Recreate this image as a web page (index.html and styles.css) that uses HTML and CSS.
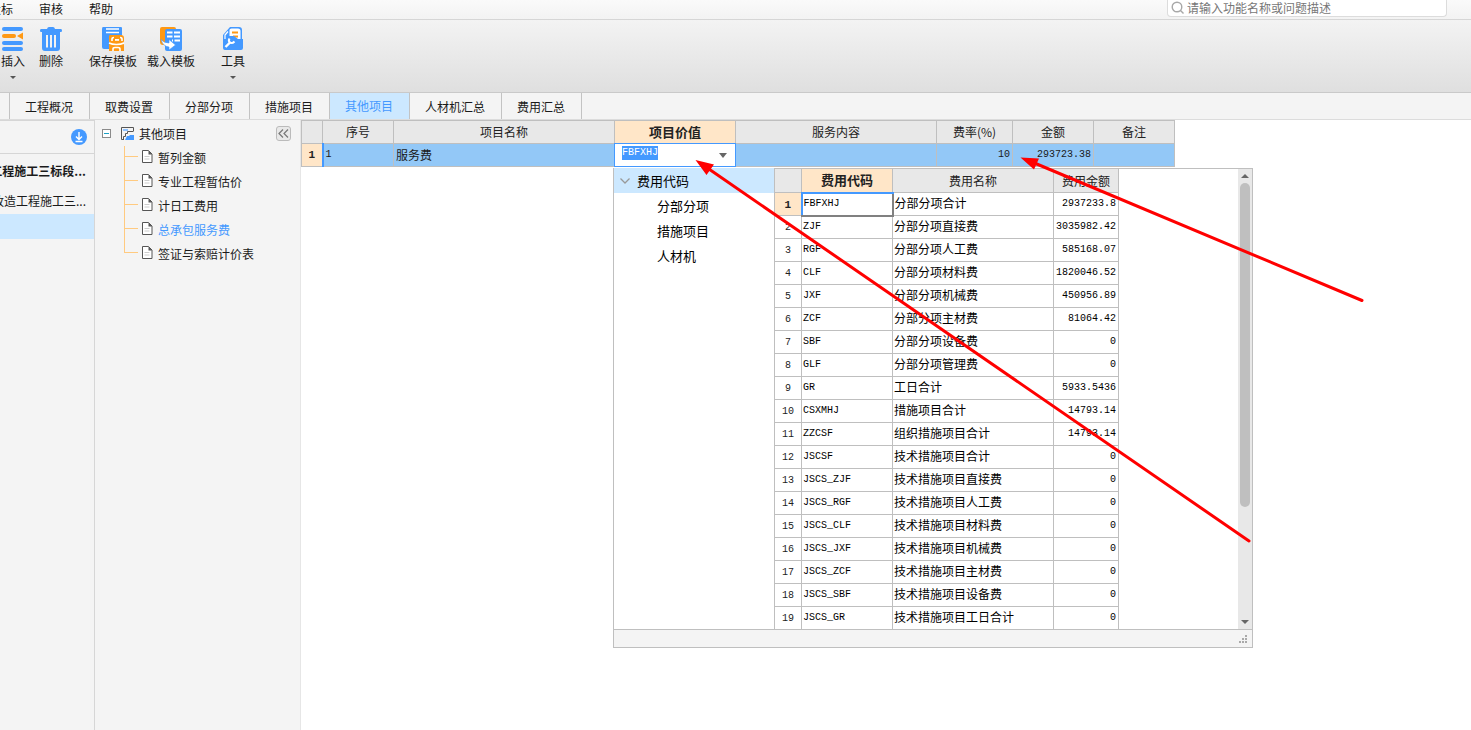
FILE: index.html
```html
<!DOCTYPE html>
<html lang="zh-CN">
<head>
<meta charset="utf-8">
<title>其他项目</title>
<link rel="stylesheet" href="styles.css">
</head>
<body>
<div class="app">
  <header class="menubar">
    <nav class="menus">
      <button class="menu" type="button">招投标</button>
      <button class="menu" type="button">审核</button>
      <button class="menu" type="button">帮助</button>
    </nav>
    <label class="search">
      <svg width="14" height="14" viewBox="0 0 14 14" fill="none" stroke="#a8a8a8" stroke-width="1.4"><circle cx="6" cy="6" r="4.8"/><path d="M9.5 9.5l3 3"/></svg>
      <input class="search-input" type="text" aria-label="搜索" placeholder="请输入功能名称或问题描述">
    </label>
  </header>

  <div class="toolbar">
    <div class="tool-group">
      <button class="tool" type="button">
        <svg width="24" height="26" viewBox="0 0 24 26"><g fill="#4499ff"><rect x="1" y="1" width="21" height="4" rx="2"/><rect x="1" y="15" width="21" height="4" rx="2"/><rect x="1" y="21" width="21" height="4" rx="2"/></g><rect x="1" y="8" width="14" height="4" rx="2" fill="#ff9914"/><path d="M16 10l6-3.500v7z" fill="#ff9914"/></svg>
        <span>插入</span><i class="drop"></i>
      </button>
      <button class="tool" type="button">
        <svg width="24" height="26" viewBox="0 0 24 26"><path fill="#4499ff" d="M2 3h6q.5-2 2-2h4q1.500 0 2 2h6q1 0 1 1.500T22 6H2Q1 6 1 4.500T2 3zM3 6h18v16q0 3-3 3H6q-3 0-3-3z"/><path stroke="#f2f2f2" stroke-width="2" d="M8 9v12.500M12 9v12.500M16 9v12.500"/></svg>
        <span>删除</span>
      </button>
    </div>
    <div class="tool-group tool-group-tight">
      <button class="tool" type="button">
        <svg width="24" height="26" viewBox="0 0 24 26"><path fill="#4499ff" d="M2 1h18q1 0 1 1v8H9v13H3q-2 0-2-2V3q0-2 1-2z"/><path stroke="#fff" stroke-width="1.500" d="M5 3h13M5 6.500h13"/><path fill="#ff9914" d="M9 9h11q3 0 3 3v3q0 1.500-1 2 1 1 1 2v6H8v-6q0-1 1-2-1-1-1-2v-4q0-2 1-2z"/><path fill="none" stroke="#fff" stroke-width="1.600" d="M11 15v-2q0-1.500 2-1.500M21 15v-2q0-1.500-2-1.500M8 17q3 1.500 7.500 1.500T23 17M12 25v-2q0-1.500 2-1.500h3q2 0 2 1.500v2"/><rect x="14" y="13" width="4" height="1.800" fill="#fff"/></svg>
        <span>保存模板</span>
      </button>
      <button class="tool" type="button">
        <svg width="24" height="26" viewBox="0 0 24 26"><path fill="#ff9914" d="M3 1h12q2 0 2 2v2H8v14H4q-3 0-3-3V3q0-2 2-2z"/><rect x="6" y="3" width="17" height="22" rx="2" fill="#4499ff"/><path stroke="#fff" stroke-width="1.800" d="M8 6.500h5.500M15 6.500h6M8 10.500h5.500M15 10.500h6M13 14.500h1M15.500 14.500h5.500"/><path fill="#fff" stroke="#4499ff" stroke-width=".6" d="M2 13.500q3 3.500 8 3.500v-3.500l6.500 5.500-6.500 5V21Q4 20.500 2 13.500z"/></svg>
        <span>载入模板</span>
      </button>
    </div>
    <div class="tool-group">
      <button class="tool" type="button">
        <svg width="24" height="26" viewBox="0 0 24 26"><path fill="#4499ff" d="M9 1h9q3 0 3 3v10l1 2v6q0 2-2 2H4q-2 0-2-2V9z"/><path fill="#fff" d="M8.500 4q0-1.500 2-1.500H17q2.500 0 2.500 2.500v9H11V10H8.500z"/><path stroke="#ff9914" stroke-width="1.800" d="M11 6.500h6M12 10.500h5"/><path fill="none" stroke="#fff" stroke-width="1.200" d="M4 13V9l3-3.500"/><path fill="#4499ff" d="M6 10h7l4 3h5v8H8z"/><path fill="none" stroke="#fff" stroke-width="2.400" d="M4.500 21l5-5"/><path fill="none" stroke="#fff" stroke-width="2" d="M8.500 12.500q-1.500 2.500.5 4t4.500-1"/></svg>
        <span>工具</span><i class="drop"></i>
      </button>
    </div>
  </div>

  <nav class="tabs">
    <button class="tab" type="button">工程概况</button>
    <button class="tab" type="button">取费设置</button>
    <button class="tab" type="button">分部分项</button>
    <button class="tab" type="button">措施项目</button>
    <button class="tab tab-active" type="button">其他项目</button>
    <button class="tab" type="button">人材机汇总</button>
    <button class="tab" type="button">费用汇总</button>
  </nav>

  <div class="workspace">
    <aside class="projects">
      <div class="projects-head">
        <button class="round" type="button" aria-label="下载">
          <svg width="16" height="16" viewBox="0 0 16 16"><circle cx="8" cy="8" r="8" fill="#4499ff"/><path d="M8 3v7M5 7.500l3 3 3-3M4.500 12.500h7" fill="none" stroke="#fff" stroke-width="1.400"/></svg>
        </button>
      </div>
      <div class="project project-bold"><span>工程施工三标段...</span></div>
      <div class="project"><span>改造工程施工三...</span></div>
      <div class="project project-selected"></div>
    </aside>

    <aside class="tree">
      <div class="tree-root">
        <button class="minus" type="button" aria-label="收起">
          <svg width="9" height="9" viewBox="0 0 9 9"><rect x=".5" y=".5" width="8" height="8" fill="#fff" stroke="#8b8b8b"/><path d="M2 4.500h5" stroke="#1ba1c5"/></svg>
        </button>
        <svg width="13" height="13" viewBox="0 0 13 13"><path d="M3 12.500H.5V.5h12V4" fill="none" stroke="#555"/><path d="M2 2h5v2H2z" fill="#8fc2ff"/><path d="M2.500 12V9.500h2v-3h2v-2h6" fill="none" stroke="#555"/><path d="M4 13l2-4h2l1-1h4v5z" fill="#4499ff"/></svg>
        <span class="tree-title">其他项目</span>
        <button class="collapse" type="button" aria-label="折叠面板">
          <svg width="11" height="9" viewBox="0 0 11 9" fill="none" stroke="#777" stroke-width="1.200"><path d="M5 .5l-4 4 4 4M10 .5l-4 4 4 4"/></svg>
        </button>
      </div>
      <ul class="leaves">
        <li class="leaf"><svg class="doc" width="11" height="13" viewBox="0 0 11 13"><path d="M.5.5h6l3.500 3.500v8.500H.5z" fill="#fff" stroke="#555"/><path d="M6.500.5v4H10z" fill="#555"/><path d="M2.500 6.500h5M2.500 9h5" stroke="#ccc"/></svg><a href="#">暂列金额</a></li>
        <li class="leaf"><svg class="doc" width="11" height="13" viewBox="0 0 11 13"><path d="M.5.5h6l3.500 3.500v8.500H.5z" fill="#fff" stroke="#555"/><path d="M6.500.5v4H10z" fill="#555"/><path d="M2.500 6.500h5M2.500 9h5" stroke="#ccc"/></svg><a href="#">专业工程暂估价</a></li>
        <li class="leaf"><svg class="doc" width="11" height="13" viewBox="0 0 11 13"><path d="M.5.5h6l3.500 3.500v8.500H.5z" fill="#fff" stroke="#555"/><path d="M6.500.5v4H10z" fill="#555"/><path d="M2.500 6.500h5M2.500 9h5" stroke="#ccc"/></svg><a href="#">计日工费用</a></li>
        <li class="leaf leaf-active"><svg class="doc" width="11" height="13" viewBox="0 0 11 13"><path d="M.5.5h6l3.500 3.500v8.500H.5z" fill="#fff" stroke="#555"/><path d="M6.500.5v4H10z" fill="#555"/><path d="M2.500 6.500h5M2.500 9h5" stroke="#ccc"/></svg><a href="#">总承包服务费</a></li>
        <li class="leaf"><svg class="doc" width="11" height="13" viewBox="0 0 11 13"><path d="M.5.5h6l3.500 3.500v8.500H.5z" fill="#fff" stroke="#555"/><path d="M6.500.5v4H10z" fill="#555"/><path d="M2.500 6.500h5M2.500 9h5" stroke="#ccc"/></svg><a href="#">签证与索赔计价表</a></li>
      </ul>
    </aside>

    <main class="main">
      <table class="grid grid-main">
        <colgroup><col class="w-21"><col class="w-71"><col class="w-221"><col class="w-121"><col class="w-201"><col class="w-76"><col class="w-81"><col class="w-81"></colgroup>
        <thead>
          <tr><th></th><th>序号</th><th>项目名称</th><th class="hot">项目价值</th><th>服务内容</th><th>费率(%)</th><th>金额</th><th>备注</th></tr>
        </thead>
        <tbody>
          <tr class="picked">
            <th class="hot mono">1</th><td class="mono first">1</td><td>服务费</td>
            <td class="edit-cell"><div class="combo"><input class="combo-input mono" type="text" aria-label="项目价值" value="FBFXHJ"><button class="combo-btn" type="button" aria-label="展开"><i class="combo-arrow"></i></button></div></td>
            <td></td><td class="mono num">10</td><td class="mono num">293723.38</td><td></td>
          </tr>
        </tbody>
      </table>

      <section class="popup">
        <div class="popup-body">
          <div class="codes">
            <div class="code-root"><svg width="10" height="6" viewBox="0 0 10 6" fill="none" stroke="#999" stroke-width="1.300"><path d="M.5.5L5 5 9.500.5"/></svg>费用代码</div>
            <div class="code-leaf">分部分项</div>
            <div class="code-leaf">措施项目</div>
            <div class="code-leaf">人材机</div>
          </div>
          <div class="fees">
            <table class="grid grid-fees">
              <colgroup><col class="w-27"><col class="w-91"><col class="w-161"><col class="w-65"></colgroup>
              <thead><tr><th></th><th class="hot">费用代码</th><th>费用名称</th><th>费用金额</th></tr></thead>
              <tbody>
                <tr><th class="hot mono">1</th><td class="mono current">FBFXHJ</td><td>分部分项合计</td><td class="mono num">2937233.8</td></tr>
                <tr><th class="mono">2</th><td class="mono">ZJF</td><td>分部分项直接费</td><td class="mono num">3035982.42</td></tr>
                <tr><th class="mono">3</th><td class="mono">RGF</td><td>分部分项人工费</td><td class="mono num">585168.07</td></tr>
                <tr><th class="mono">4</th><td class="mono">CLF</td><td>分部分项材料费</td><td class="mono num">1820046.52</td></tr>
                <tr><th class="mono">5</th><td class="mono">JXF</td><td>分部分项机械费</td><td class="mono num">450956.89</td></tr>
                <tr><th class="mono">6</th><td class="mono">ZCF</td><td>分部分项主材费</td><td class="mono num">81064.42</td></tr>
                <tr><th class="mono">7</th><td class="mono">SBF</td><td>分部分项设备费</td><td class="mono num">0</td></tr>
                <tr><th class="mono">8</th><td class="mono">GLF</td><td>分部分项管理费</td><td class="mono num">0</td></tr>
                <tr><th class="mono">9</th><td class="mono">GR</td><td>工日合计</td><td class="mono num">5933.5436</td></tr>
                <tr><th class="mono">10</th><td class="mono">CSXMHJ</td><td>措施项目合计</td><td class="mono num">14793.14</td></tr>
                <tr><th class="mono">11</th><td class="mono">ZZCSF</td><td>组织措施项目合计</td><td class="mono num">14793.14</td></tr>
                <tr><th class="mono">12</th><td class="mono">JSCSF</td><td>技术措施项目合计</td><td class="mono num">0</td></tr>
                <tr><th class="mono">13</th><td class="mono">JSCS_ZJF</td><td>技术措施项目直接费</td><td class="mono num">0</td></tr>
                <tr><th class="mono">14</th><td class="mono">JSCS_RGF</td><td>技术措施项目人工费</td><td class="mono num">0</td></tr>
                <tr><th class="mono">15</th><td class="mono">JSCS_CLF</td><td>技术措施项目材料费</td><td class="mono num">0</td></tr>
                <tr><th class="mono">16</th><td class="mono">JSCS_JXF</td><td>技术措施项目机械费</td><td class="mono num">0</td></tr>
                <tr><th class="mono">17</th><td class="mono">JSCS_ZCF</td><td>技术措施项目主材费</td><td class="mono num">0</td></tr>
                <tr><th class="mono">18</th><td class="mono">JSCS_SBF</td><td>技术措施项目设备费</td><td class="mono num">0</td></tr>
                <tr><th class="mono">19</th><td class="mono">JSCS_GR</td><td>技术措施项目工日合计</td><td class="mono num">0</td></tr>
              </tbody>
            </table>
            <div class="scroll">
              <i class="scroll-up"></i>
              <div class="scroll-track"><div class="scroll-thumb"></div></div>
              <i class="scroll-down"></i>
            </div>
          </div>
        </div>
        <div class="popup-foot">
          <svg width="8" height="8" viewBox="0 0 8 8" fill="#aaa"><path d="M6 0h2v2H6zM3 3h2v2H3zM6 3h2v2H6zM0 6h2v2H0zM3 6h2v2H3zM6 6h2v2H6z"/></svg>
        </div>
      </section>
    </main>
  </div>

  <svg class="arrows" width="1471" height="730" viewBox="0 0 1471 730" fill="#f00" stroke="#f00" stroke-linecap="round">
    <path d="M706 167L1249 541M1032 162L1362 300.500" stroke-width="3"/>
    <path d="M695.500 160l18.500 4.500L706.500 175zM1020.500 157.500l18.500 1L1034 169.500z" stroke="none"/>
  </svg>
</div>
<script src="app.js"></script>
</body>
</html>
```

FILE: styles.css
```css
* { box-sizing: border-box; }
body {
  margin: 0;
  font: 12px/16px "Noto Sans CJK SC", sans-serif;
  color: #1a1a1a;
  background: #fff;
}
button {
  font: inherit;
  color: inherit;
  background: none;
  border: 0;
  padding: 0;
}
input { font: inherit; }
svg { display: block; flex: none; }
.app {
  position: relative;
  display: flex;
  flex-direction: column;
  min-height: 100vh;
  overflow: hidden;
}

.menubar {
  display: flex;
  justify-content: space-between;
  align-items: flex-start;
  height: 20px;
  padding-right: 24px;
  background: linear-gradient(#fafafa, #f3f3f3);
  border-bottom: 1px solid #d6d6d6;
}
.menus { display: flex; gap: 26px; margin-left: -23px; padding-top: 1px; }
.menu { white-space: nowrap; }
.search {
  display: flex;
  align-items: center;
  gap: 2px;
  width: 280px;
  height: 17px;
  padding: 0 3px;
  background: #fff;
  border: 1px solid #dcdcdc;
  border-top: 0;
  border-radius: 0 0 4px 4px;
}
.search-input {
  flex: 1;
  min-width: 0;
  height: 16px;
  padding: 0;
  border: 0;
  outline: 0;
  background: none;
}
.search-input::placeholder { color: #777; opacity: 1; }

.toolbar {
  display: flex;
  gap: 26px;
  height: 73px;
  padding: 6px 1px 0;
  background: linear-gradient(#f3f3f3, #dfdfdf);
  border-bottom: 1px solid #c9c9c9;
}
.tool-group { display: flex; gap: 14px; }
.tool-group-tight { gap: 10px; }
.tool {
  display: flex;
  flex-direction: column;
  align-items: center;
  gap: 1px;
  height: 54px;
  white-space: nowrap;
}
.drop {
  margin-top: 6px;
  border: 3px solid transparent;
  border-top-color: #555;
  border-bottom: 0;
}

.tabs {
  display: flex;
  height: 27px;
  padding-left: 9px;
  background: #f4f4f4;
  border-bottom: 1px solid #dcdcdc;
}
.tab {
  padding: 2px 16px 0 15px;
  border-left: 1px solid #c3c3c3;
}
.tab:last-child { border-right: 1px solid #c3c3c3; }
.tab-active { padding-top: 0; color: #4499ff; background: #cce8ff; }

.workspace { flex: 1; display: flex; }
.projects {
  width: 95px;
  overflow: hidden;
  background: #f4f4f4;
  border-right: 1px solid #d6d6d6;
}
.projects-head {
  display: flex;
  justify-content: flex-end;
  align-items: center;
  height: 34px;
  padding-right: 7px;
  border-top: 1px solid #d6d6d6;
  border-bottom: 1px solid #d6d6d6;
}
.project {
  display: flex;
  justify-content: flex-end;
  align-items: center;
  height: 26px;
  padding-right: 8px;
  white-space: nowrap;
}
.project-bold { height: 34px; font-weight: 700; }
.project-selected { height: 25px; background: #cce8ff; }

.tree {
  width: 206px;
  background: #f4f4f4;
  border-right: 1px solid #e6e6e6;
}
.tree-root {
  display: flex;
  align-items: center;
  height: 26px;
  padding: 0 9px 0 7px;
}
.minus { margin-right: 10px; }
.tree-title { margin: 2px auto 0 5px; }
.collapse {
  display: flex;
  align-items: center;
  justify-content: center;
  width: 15px;
  height: 15px;
  background: #e9e9e9;
  border: 1px solid #bbb;
  border-radius: 3px;
}
.leaves { margin: 0 0 0 29px; padding: 0; list-style: none; }
.leaf {
  display: grid;
  grid-template-columns: 13px 11px auto;
  grid-template-rows: 11px 13px;
  height: 24px;
  border-left: 1px solid #ffca80;
}
.leaf::before {
  content: "";
  grid-area: 1 / 1;
  border-bottom: 1px solid #ffca80;
}
.leaf:last-child { border-left-color: transparent; }
.leaf:last-child::before { margin-left: -1px; border-left: 1px solid #ffca80; }
.doc { grid-area: 1 / 2 / 3 / 3; margin: 4px 0 0 4px; }
.leaf a {
  grid-area: 1 / 3 / 3 / 4;
  padding: 4px 0 0 9px;
  color: inherit;
  text-decoration: none;
  white-space: nowrap;
}
.leaf-active a { color: #4499ff; }

.main { position: relative; flex: 1; min-width: 0; }
.grid { border-collapse: collapse; table-layout: fixed; color: #000; }
.grid th, .grid td {
  height: 23px;
  padding: 0 2px;
  border: 1px solid #bfbfbf;
  line-height: 16px;
  text-align: left;
  white-space: nowrap;
}
.grid th { font-weight: 400; text-align: center; background: #e8e8e8; color: #222; }
.grid tbody th { background: #fff; }
.grid th.hot { font-size: 13px; font-weight: 700; background: #ffe6c8; }
.grid .mono, .mono { font-family: "Liberation Mono", monospace; font-size: 10px; }
.grid tbody th.hot { font-size: 11px; background: #ffe6c8; }
.grid td.num { text-align: right; }
.grid-main { width: 874px; }
.picked td { background: #93c8f7; color: #1a1a1a; }
.picked .first { border-left: 2px solid #4499ff; }
.grid .edit-cell { padding: 0; background: #fff; }
.w-21 { width: 21px; }
.w-27 { width: 27px; }
.w-65 { width: 65px; }
.w-71 { width: 71px; }
.w-76 { width: 76px; }
.w-81 { width: 81px; }
.w-91 { width: 91px; }
.w-121 { width: 121px; }
.w-161 { width: 161px; }
.w-201 { width: 201px; }
.w-221 { width: 221px; }
.combo {
  display: flex;
  align-items: center;
  height: 22px;
  padding: 0 8px 0 7px;
  outline: 1px solid #4499ff;
}
.combo-input {
  flex: 1;
  min-width: 0;
  height: 14px;
  margin-bottom: 4px;
  padding: 0;
  border: 0;
  outline: 0;
  line-height: 14px;
}
.combo-input::selection { color: #fff; background: #4499ff; }
.combo-arrow {
  display: block;
  border: 4px solid transparent;
  border-top: 5px solid #666;
  border-bottom: 0;
}

.popup {
  position: absolute;
  top: 48px;
  left: 312px;
  width: 640px;
  background: #fff;
  border: 1px solid #bfbfbf;
  border-top: 0;
}
.popup-body { display: flex; height: 461px; }
.codes { width: 160px; font-size: 13px; color: #000; }
.code-root, .code-leaf { display: flex; align-items: center; height: 25px; }
.code-root { gap: 7px; padding-left: 6px; background: #cce8ff; }
.code-leaf { padding-left: 43px; }
.fees {
  flex: 1;
  display: flex;
  justify-content: space-between;
  align-items: flex-start;
  overflow: hidden;
  border-top: 1px solid #bfbfbf;
}
.grid-fees { width: 345px; margin-top: -1px; }
.grid-fees thead th { height: 24px; }
.grid-fees tbody th { padding-top: 2px; }
.grid-fees tbody td { padding-left: 1px; }
.grid-fees tbody td:not(.mono) { padding-bottom: 2px; }
.grid-fees thead th.hot { border-bottom: 2px solid #4499ff; }
.grid-fees td.current {
  border-right: 2px solid #808080;
  border-bottom: 2px solid #808080;
  border-left: 2px solid #4499ff;
}
.scroll {
  align-self: stretch;
  display: flex;
  flex-direction: column;
  align-items: center;
  width: 14px;
  padding: 5px 0;
  background: #e8e8e8;
}
.scroll-up { border: 4px solid transparent; border-bottom: 4px solid #666; border-top: 0; }
.scroll-down { border: 4px solid transparent; border-top: 4px solid #666; border-bottom: 0; }
.scroll-track { flex: 1; width: 10px; padding: 5px 0; }
.scroll-thumb { height: 75%; background: #bfbfbf; border-radius: 5px; }
.popup-foot {
  display: flex;
  justify-content: flex-end;
  align-items: center;
  height: 18px;
  padding-right: 5px;
  background: #f4f4f4;
  border-top: 1px solid #bfbfbf;
}

.arrows { position: absolute; top: 0; left: 0; pointer-events: none; }
```

FILE: app.js
```js
const combo = document.querySelector(".combo-input");
combo.focus();
combo.select();
```
